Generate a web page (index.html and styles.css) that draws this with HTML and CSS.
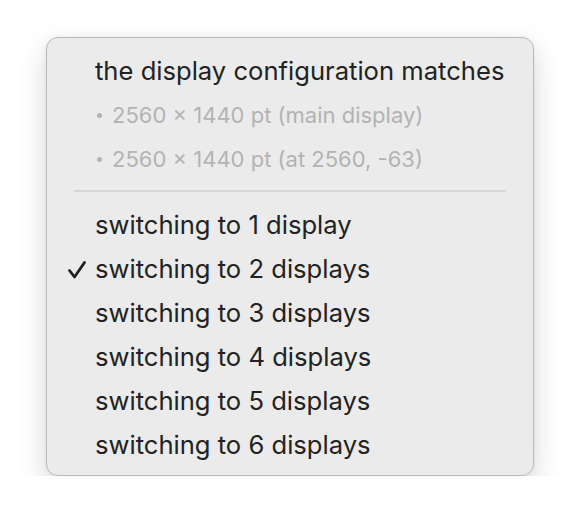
FILE: index.html
```html
<!DOCTYPE html>
<html>
<head>
<meta charset="utf-8">
<link rel="stylesheet" href="styles.css">
</head>
<body>
<div class="menu">
  <div class="item head">the display configuration matches</div>
  <div class="item sub"><span class="dot"></span>2560 × 1440 pt (main display)</div>
  <div class="item sub"><span class="dot"></span>2560 × 1440 pt (at 2560, -63)</div>
  <div class="sep"></div>
  <div class="item">switching to 1 display</div>
  <div class="item checked"><svg class="check" width="20" height="20" viewBox="0 0 20 20"><path d="M2.5 10.5 L7.5 17 L17.5 2.5" fill="none" stroke="#1f1f1f" stroke-width="2.8" stroke-linecap="round" stroke-linejoin="round"/></svg>switching to 2 displays</div>
  <div class="item">switching to 3 displays</div>
  <div class="item">switching to 4 displays</div>
  <div class="item">switching to 5 displays</div>
  <div class="item">switching to 6 displays</div>
</div>
</body>
</html>
```
FILE: styles.css
```css
html, body {
  margin: 0;
  padding: 0;
  background: #ffffff;
}
body {
  padding: 37px 0 0 46px;
  font-family: Inter, "Noto Sans", sans-serif;
}
.menu {
  width: 488px;
  height: 439px;
  box-sizing: border-box;
  background: #ebebeb;
  border: 1px solid #b9b9b9;
  border-radius: 12px;
  box-shadow: 0 12px 30px rgba(0,0,0,0.16), 0 0 6px rgba(0,0,0,0.05);
  padding: 11px 0 9px 0;
  display: flex;
  flex-direction: column;
}
.item {
  height: 44px;
  display: flex;
  align-items: center;
  padding-left: 48px;
  font-size: 25.6px;
  color: #222222;
  position: relative;
  white-space: nowrap;
}
.sub {
  color: #b3b3b3;
  font-size: 22px;
}
.dot {
  width: 5px;
  height: 5px;
  border-radius: 50%;
  background: #b3b3b3;
  margin: 2px 10px 0 2px;
}
.sep {
  height: 2px;
  background: #d6d6d6;
  margin: 9px 27px 11px 27px;
}
.check {
  position: absolute;
  left: 20px;
  top: 13px;
}
```
